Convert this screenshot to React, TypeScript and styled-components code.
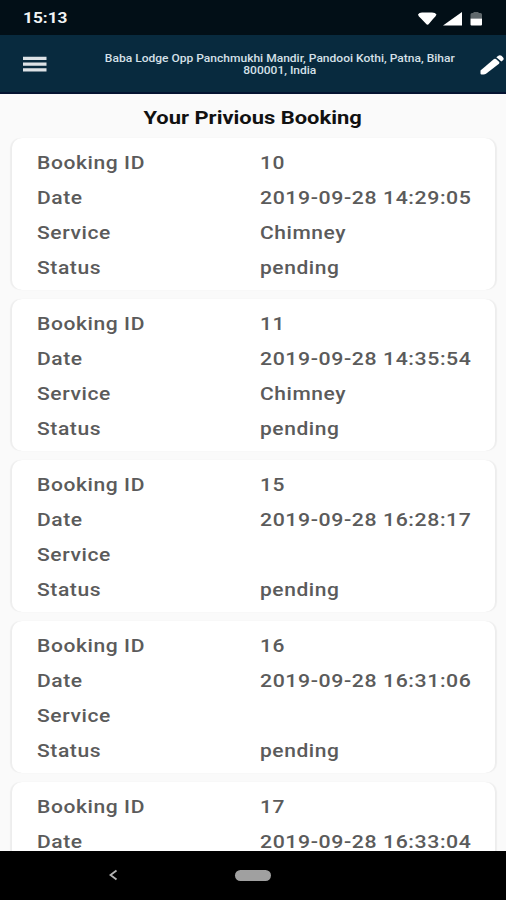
import React from "react";
import styled, { createGlobalStyle } from "styled-components";

const GlobalStyle = createGlobalStyle`
  * { box-sizing: border-box; }
  body { margin: 0; background: #fafafa; }
`;

const Screen = styled.div`
  width: 506px;
  height: 900px;
  display: flex;
  flex-direction: column;
  overflow: hidden;
  background: #fafafa;
  font-family: Roboto, sans-serif;
`;

const Stretch = styled.span<{ $scale: number; $origin?: string }>`
  display: inline-block;
  white-space: nowrap;
  transform: scaleX(${(p) => p.$scale});
  transform-origin: ${(p) => p.$origin ?? "left"} center;
`;

const StatusBar = styled.div`
  flex: none;
  height: 35px;
  padding: 1px 21px 0 23px;
  display: flex;
  align-items: center;
  justify-content: space-between;
  background: #020f17;
  color: #f1f4f5;
  font-size: 15px;
  font-weight: 700;
`;

const StatusIcons = styled.svg`
  display: block;
  width: 68px;
  height: 16px;
`;

const AppBar = styled.header`
  flex: none;
  height: 59px;
  display: grid;
  grid-template-columns: 80px 400px 26px;
  background: #082a3e;
  border-bottom: 2px solid #041331;
`;

const MenuIcon = styled.svg`
  margin: 21px 0 0 22px;
  width: 26px;
  height: 17px;
`;

const EditIcon = styled.svg`
  margin-top: 18px;
  width: 26px;
  height: 24px;
`;

const Address = styled.div`
  padding-top: 18px;
  text-align: center;
  color: #d5e0e8;
  font-size: 10.5px;
  font-weight: 500;
  line-height: 12px;
`;

const Content = styled.main`
  flex: 1;
  min-height: 0;
  overflow: hidden;
`;

const Title = styled.h1`
  margin: 0;
  height: 44px;
  line-height: 47px;
  text-align: center;
  font-size: 18px;
  font-weight: 700;
  color: #111;
`;

const CardList = styled.div`
  display: flex;
  flex-direction: column;
  gap: 9px;
  padding: 0 11px 0 12px;
`;

const Card = styled.section`
  flex: none;
  height: 152px;
  padding: 7px 0 0 25px;
  background: #fff;
  border-radius: 10px;
  box-shadow: -1.5px 0 1px rgba(0, 0, 0, 0.05), 1.5px 0 1px rgba(0, 0, 0, 0.05);
`;

const Row = styled.div`
  display: grid;
  grid-template-columns: 223px 1fr;
  height: 35.1px;
  line-height: 36px;
  font-size: 18px;
  font-weight: 500;
  letter-spacing: 0.5px;
  color: #5b5b5b;
`;

const NavBar = styled.nav`
  flex: none;
  height: 49px;
  padding: 0 0 1px 108px;
  display: flex;
  align-items: center;
  background: #000;
`;

const BackIcon = styled.svg`
  width: 10px;
  height: 12px;
`;

const HomePill = styled.div`
  width: 36px;
  height: 11px;
  margin-left: 117px;
  border-radius: 6px;
  background: #a0a0a0;
`;

type FieldData = [label: string, value: string];

const bookings: FieldData[][] = [
  [["Booking ID", "10"], ["Date", "2019-09-28 14:29:05"], ["Service", "Chimney"], ["Status", "pending"]],
  [["Booking ID", "11"], ["Date", "2019-09-28 14:35:54"], ["Service", "Chimney"], ["Status", "pending"]],
  [["Booking ID", "15"], ["Date", "2019-09-28 16:28:17"], ["Service", ""], ["Status", "pending"]],
  [["Booking ID", "16"], ["Date", "2019-09-28 16:31:06"], ["Service", ""], ["Status", "pending"]],
  [["Booking ID", "17"], ["Date", "2019-09-28 16:33:04"]],
];

function Field({ label, value }: { label: string; value: string }) {
  return (
    <Row>
      <div><Stretch $scale={1.17}>{label}</Stretch></div>
      <div><Stretch $scale={label === "Date" ? 1.182 : 1.165}>{value}</Stretch></div>
    </Row>
  );
}

export default function App() {
  return (
    <Screen>
      <GlobalStyle />
      <StatusBar>
        <Stretch $scale={1.15}>15:13</Stretch>
        <StatusIcons viewBox="0 0 68 16" fill="#fff">
          <path d="M1 4.500Q2 2.500 5 2.500H15Q18.500 2.500 19.500 4.500Q19 6 16 9L12 13.800Q10.500 15.500 9 13.800L4 8.500Q1 6 1 4.500Z" />
          <path d="M26 15.500L45 2V15.500Z" />
          <path d="M53.500 4.500Q53.500 3 55 3H56.500V2H61.500V3H63.500Q65 3 65 4.500V8.500H53.500Z" fill="#5f686c" />
          <path d="M53.500 8.500H65V14.500Q65 15.500 64 15.500H54.500Q53.500 15.500 53.500 14.500Z" />
        </StatusIcons>
      </StatusBar>
      <AppBar>
        <MenuIcon viewBox="0 0 26 17" fill="#dde2e6">
          <path d="M1 .7H24.500V4H1ZM1 6.500H24.500V9.800H1ZM1 12.300H24.500V15.600H1Z" />
        </MenuIcon>
        <Address>
          <Stretch $scale={1.145} $origin="center">
            Baba Lodge Opp Panchmukhi Mandir, Pandooi Kothi, Patna, Bihar<br />800001, India
          </Stretch>
        </Address>
        <EditIcon viewBox="0 0 26 24" fill="#fff">
          <path d="M.5 17.500L14 6Q15 5.300 16 6L19 8.800Q20 9.800 19 10.700L6 20.800Q5 21.500 3.500 21.500H1.500Q.5 21.500 .5 20.500Z" />
          <path d="M16.300 4.300L18 3Q19.800 1.500 21.500 2.800L23.200 4.400Q24.500 6 23 7.300L21.300 8.600Z" />
        </EditIcon>
      </AppBar>
      <Content>
        <Title><Stretch $scale={1.218} $origin="center">Your Privious Booking</Stretch></Title>
        <CardList>
          {bookings.map((fields) => (
            <Card key={fields[0][1]}>
              {fields.map(([label, value]) => (
                <Field key={label} label={label} value={value} />
              ))}
            </Card>
          ))}
        </CardList>
      </Content>
      <NavBar>
        <BackIcon viewBox="0 0 10 12" fill="none" stroke="#b5b5b5" strokeWidth="1.8">
          <path d="M8.500 1.500L2.500 6L8.500 10.500" />
        </BackIcon>
        <HomePill />
      </NavBar>
    </Screen>
  );
}
